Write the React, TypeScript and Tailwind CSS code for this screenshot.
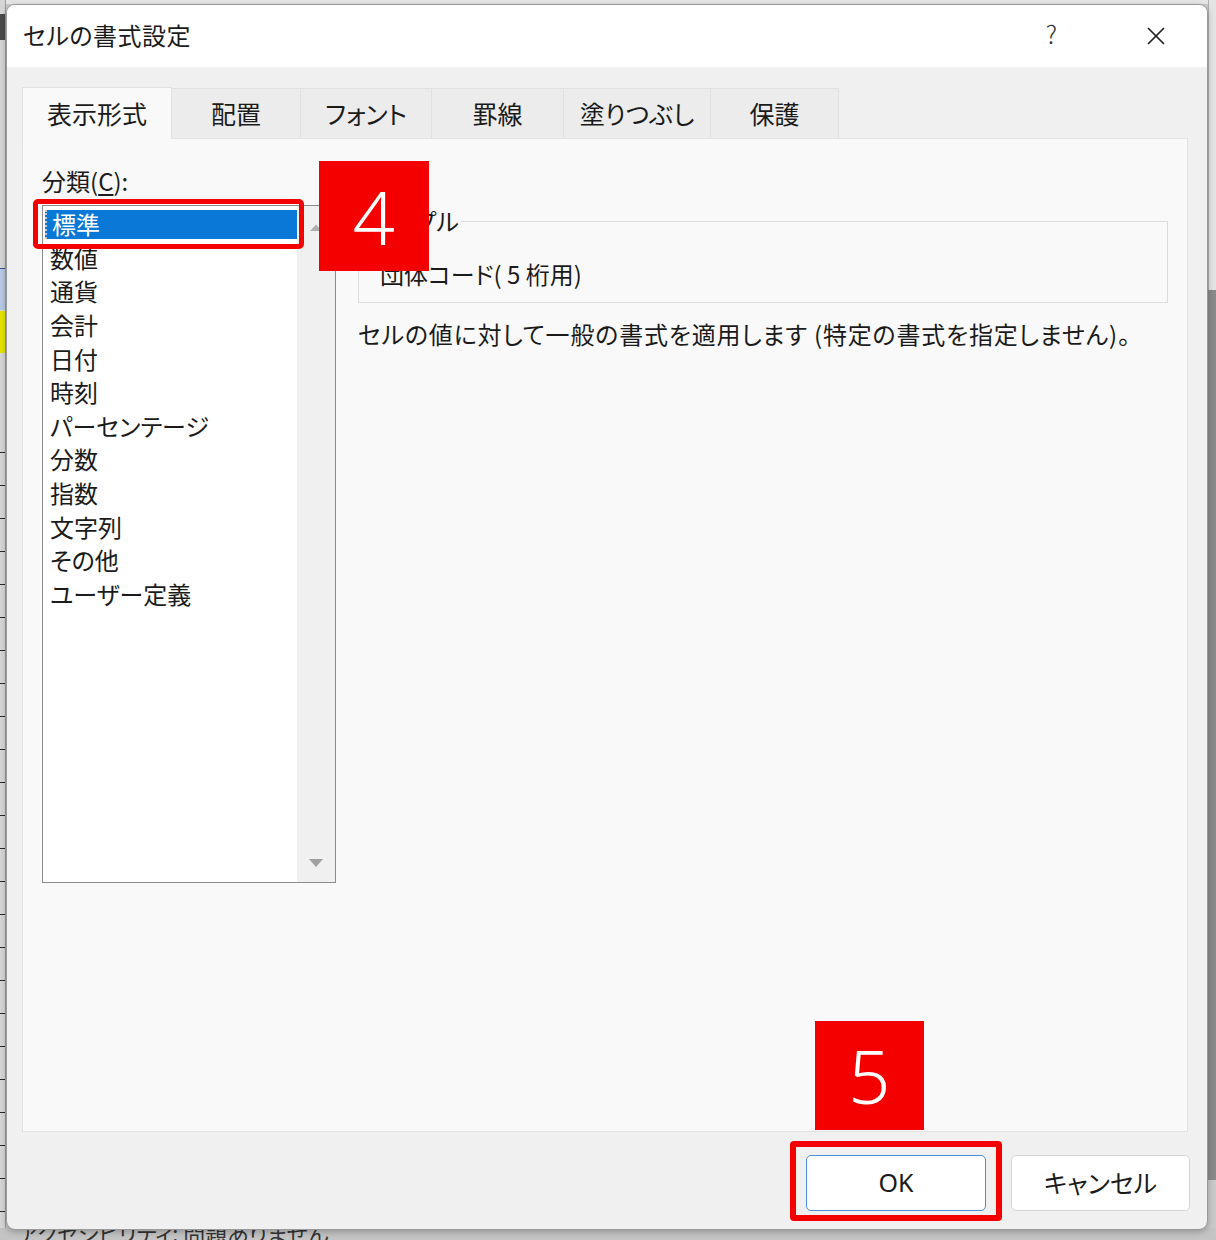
import { X } from "lucide-react";

const categories = [
    "標準",
    "数値",
    "通貨",
    "会計",
    "日付",
    "時刻",
    "パーセンテージ",
    "分数",
    "指数",
    "文字列",
    "その他",
    "ユーザー定義",
];

const tabs = [
    { label: "表示形式", w: "w-[150px]" },
    { label: "配置", w: "w-[129px]" },
    { label: "フォント", w: "w-[131px]" },
    { label: "罫線", w: "w-[132px]" },
    { label: "塗りつぶし", w: "w-[147px]" },
    { label: "保護", w: "w-[128px]" },
];

const jp = "[font-family:'Noto_Sans_CJK_JP','Noto_Sans',sans-serif] [font-feature-settings:'palt']";

export default function App() {
    return (
        <div className={`relative w-[1216px] h-[1240px] overflow-hidden bg-[#c9c9c9] ${jp}`}>
            {/* spreadsheet peeking out behind the dialog */}
            <div className="absolute left-0 top-0 w-[1216px] h-[4px] bg-[#e6e6e6]" />
            <div className="absolute left-0 top-0 w-[6px] h-[1240px] bg-[#d6d6d6] border-r border-[#9c9c9c]" />
            <div className="absolute left-0 top-[14px] w-[5px] h-[26px] bg-[#4a4a4a]" />
            <div className="absolute left-0 top-[268px] w-[5px] h-[42px] bg-[#b9c9e4] border-t border-[#3a4fa0]" />
            <div className="absolute left-0 top-[311px] w-[5px] h-[42px] bg-[#e4e400]" />
            <div className="absolute left-0 top-[420px] w-[5px] flex flex-col">
                {Array.from({ length: 24 }).map((_, i) => (
                    <div key={i} className="h-[33px] border-b border-[#2a2a2a]" />
                ))}
            </div>
            <div className="absolute right-0 top-0 w-[8px] h-[290px] bg-[#e4e4e4] border-l border-[#b0b0b0]" />
            <div className="absolute right-0 top-[290px] w-[8px] h-[890px] bg-[#8a8a8a]" />
            <div className="absolute left-0 bottom-0 w-[1216px] h-[12px] bg-[#c4c4c4] text-[22px] leading-[8px] text-[#333] pl-[18px] overflow-hidden">
                アクセシビリティ: 問題ありません
            </div>

            <div className="pt-[4px] pl-[6px]">
                <div className="relative w-[1202px] h-[1226px] rounded-[9px] border border-[#9a9a9a] bg-[#f0f0f0] shadow-[0_2px_6px_rgba(0,0,0,0.25)] flex flex-col overflow-hidden text-[#1b1b1b]">
                    {/* title bar */}
                    <div className="h-[62px] bg-white flex items-center pl-[16px] pr-[36px]">
                        <div className="text-[24px] tracking-[0.5px] mt-[-2px]">セルの書式設定</div>
                        <div className="ml-auto text-[25px] text-[#333] font-light mt-[-4px]">?</div>
                        <X className="ml-[84px] w-[30px] h-[30px] text-[#222]" strokeWidth={1.4} />
                    </div>

                    {/* body */}
                    <div className="flex-1 flex flex-col pl-[15px] pr-[19px] pt-[20px]">
                        <div className="flex h-[51px]">
                            {tabs.map((t, i) => (
                                <div
                                    key={t.label}
                                    className={`${t.w} flex items-center justify-center text-[25px] border-t border-r border-[#e0e0e0] ${
                                        i === 0
                                            ? "bg-[#f9f9f9] border-l relative z-10 h-[52px]"
                                            : "bg-[#ececec] mt-[1px] h-[50px]"
                                    }`}
                                >
                                    {t.label}
                                </div>
                            ))}
                        </div>

                        <div className="relative w-[1166px] h-[994px] bg-[#f9f9f9] border border-[#e2e2e2] flex pl-[19px] pr-[19px] pt-[20px] gap-[22px]">
                            {/* category list */}
                            <div className="flex flex-col">
                                <div className="text-[24px] leading-[44px] h-[46px]">
                                    分類(<span className="underline underline-offset-[3px]">C</span>):
                                </div>
                                <div className="relative w-[294px] h-[678px] bg-white border border-[#8c8c8c] flex">
                                    <div className="flex-1 flex flex-col pt-[1.5px] pl-[2px]">
                                        {categories.map((c, i) => (
                                            <div key={c} className="h-[33.6px] py-[2px]">
                                                <div
                                                    className={`h-full flex items-center pl-[5px] text-[24px] ${
                                                        i === 0 ? "bg-[#0a78d6] text-white border-l-2 border-dotted border-[#c8c8c8]" : ""
                                                    }`}
                                                >
                                                    {c}
                                                </div>
                                            </div>
                                        ))}
                                    </div>
                                    <div className="w-[38px] bg-[#f0f0f0] flex flex-col items-center justify-between pt-[17px] pb-[14px]">
                                        <svg width="14" height="9" viewBox="0 0 14 9">
                                            <path d="M1 8 L7 1.5 L13 8 Z" fill="#b0b0b0" />
                                        </svg>
                                        <svg width="16" height="10" viewBox="0 0 16 10">
                                            <path d="M1 1 L15 1 L8 9 Z" fill="#a0a0a0" />
                                        </svg>
                                    </div>

                                    {/* highlight box around 標準 */}
                                    <div className="absolute left-[-10px] top-[-7px] w-[271px] h-[50px] border-[5px] border-[#f50000] rounded-[5px]" />
                                </div>
                            </div>

                            {/* sample + description */}
                            <div className="flex-1 flex flex-col pt-[62px]">
                                <div className="relative h-[82px] border border-[#dcdcdc] flex items-center pl-[21px] pt-[23px]">
                                    <div className="absolute left-[10px] top-[-17px] bg-[#f9f9f9] px-[2px] text-[24px] leading-[32px]">
                                        サンプル
                                    </div>
                                    <div className="text-[24px]">団体コード( 5 桁用)</div>
                                </div>
                                <div className="mt-[14px] text-[24px] leading-[34px] tracking-[0.8px]">
                                    セルの値に対して一般の書式を適用します (特定の書式を指定しません)。
                                </div>
                            </div>

                            {/* step badge 4 */}
                            <div className="absolute left-[296px] top-[22px] w-[110px] h-[110px] bg-[#f50000] flex items-center justify-center text-white text-[74px] font-light [font-family:'Noto_Sans','Liberation_Sans',sans-serif]">
                                4
                            </div>
                        </div>

                        {/* footer buttons */}
                        <div className="flex justify-end gap-[25px] pt-[23px] mr-[-2px]">
                            <div className="relative">
                                <button className="w-[180px] h-[56px] bg-white border border-[#4a90d9] rounded-[5px] text-[25px] [font-family:'Noto_Sans','Liberation_Sans',sans-serif]">
                                    OK
                                </button>
                                <div className="absolute left-[-16px] top-[-14px] w-[212px] h-[80px] border-[6px] border-[#f50000] rounded-[4px]" />
                                <div className="absolute left-[9px] top-[-134px] w-[109px] h-[109px] bg-[#f50000] flex items-center justify-center text-white text-[74px] font-light [font-family:'Noto_Sans','Liberation_Sans',sans-serif]">
                                    5
                                </div>
                            </div>
                            <button className="w-[179px] h-[56px] bg-white border border-[#d4d4d4] rounded-[5px] text-[25px]">
                                キャンセル
                            </button>
                        </div>
                    </div>
                </div>
            </div>
        </div>
    );
}
